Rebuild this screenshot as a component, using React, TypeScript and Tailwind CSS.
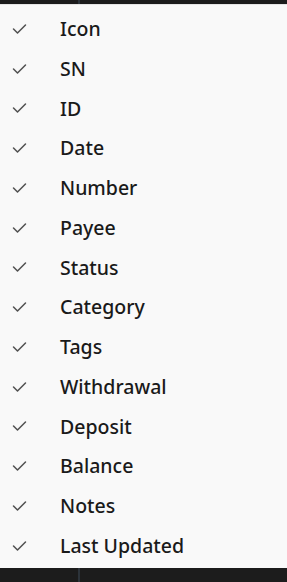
const columns = [
  "Icon",
  "SN",
  "ID",
  "Date",
  "Number",
  "Payee",
  "Status",
  "Category",
  "Tags",
  "Withdrawal",
  "Deposit",
  "Balance",
  "Notes",
  "Last Updated",
]

function Check() {
  return (
    <svg width="15" height="12" viewBox="0 0 15 12" fill="none">
      <path d="M1.5 6 L5.5 10 L13.5 2" stroke="#4f4f4f" strokeWidth="1.5" strokeLinecap="round" strokeLinejoin="round" />
    </svg>
  )
}

export default function App() {
  return (
    <div className="w-[287px] h-[582px] flex flex-col bg-[#1c1c1c] overflow-hidden" style={{ fontFamily: '"Segoe UI", "Noto Sans", "Open Sans", sans-serif' }}>
      {/* top strip of the window behind */}
      <div className="h-[4px] flex shrink-0">
        <div className="w-[78px] bg-[#1c1c1c]" />
        <div className="w-[2px] bg-[#2c333a]" />
        <div className="flex-1 bg-[#1c1c1c]" />
      </div>

      <div className="h-[564px] shrink-0 bg-[#f9f9f9] border-t border-[#e5e5e5] pt-[4px] flex flex-col">
        {columns.map((c) => (
          <div key={c} className="h-[39.75px] flex items-center shrink-0">
            <div className="w-[60px] pl-[12px] flex items-center">
              <Check />
            </div>
            <span className="text-[19.5px] font-medium text-[#1a1a1a] leading-none">{c}</span>
          </div>
        ))}
      </div>

      <div className="flex-1 flex">
        <div className="w-[78px] bg-[#1c1c1c]" />
        <div className="w-[2px] bg-[#2c333a]" />
        <div className="flex-1 bg-[#1c1c1c]" />
      </div>
    </div>
  )
}
